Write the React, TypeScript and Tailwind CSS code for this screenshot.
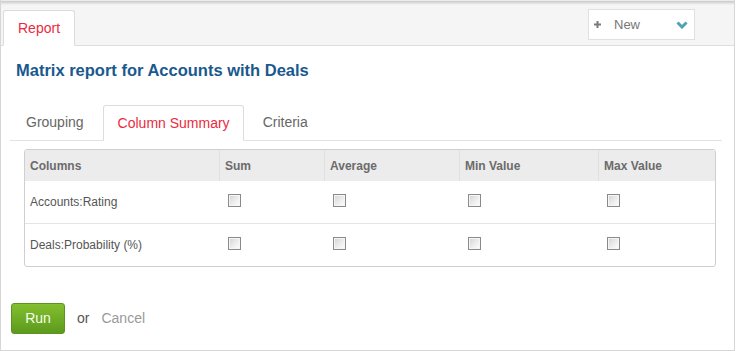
const cols = ["Sum", "Average", "Min Value", "Max Value"];
const rows = ["Accounts:Rating", "Deals:Probability (%)"];

function Box() {
  return (
    <span className="block w-[13px] h-[13px] border border-[#8a8a8a] bg-gradient-to-br from-[#d2d2d2] via-[#ebebeb] to-white shadow-[inset_0_0_0_1px_#f6f6f6]" />
  );
}

export default function App() {
  return (
    <div className="w-[736px] h-[351px] bg-white overflow-hidden font-['Liberation_Sans',Arial,sans-serif]">
      <div className="w-[735px] h-[351px] flex flex-col border-l border-r border-b border-[#d6d6d6]">
        {/* top bar */}
        <div className="h-px bg-[#ececec]" />
        <div className="h-[4px] bg-gradient-to-b from-[#c9c9c9] to-[#f5f5f5]" />
        <div className="h-[41px] bg-[#f5f5f5] border-b border-[#dedede] flex items-end pl-[2px]">
          <div className="w-[72px] h-[36px] -mb-px bg-white border border-[#dcdcdc] border-b-white rounded-t-[3px] flex items-center pl-[14px] text-[14px] text-[#ec2a40]">
            Report
          </div>
          <div className="ml-auto mr-[39px] self-start mt-[4px] w-[107px] h-[31px] bg-white border border-[#e0e0e0] flex items-center pl-[5px] pr-[6px]">
            <svg width="7" height="7" viewBox="0 0 7 7">
              <rect x="2.5" y="0" width="2" height="7" fill="#7a7a7a" />
              <rect x="0" y="2.5" width="7" height="2" fill="#7a7a7a" />
            </svg>
            <span className="ml-[13px] text-[13px] text-[#777]">New</span>
            <svg className="ml-auto" width="12" height="8" viewBox="0 0 12 8">
              <polyline points="1.5,1.5 6,6 10.5,1.5" fill="none" stroke="#4ea3b7" strokeWidth="3" />
            </svg>
          </div>
        </div>

        {/* title */}
        <div className="mt-[14px] pl-[15px] leading-[20px] text-[16.5px] font-bold text-[#19598e]">
          Matrix report for Accounts with Deals
        </div>

        {/* sub tabs */}
        <div className="mt-[25px] ml-[9px] w-[712px] h-[36px] border-b border-[#e2e2e2] flex items-end text-[14px]">
          <div className="h-[35px] flex items-center pl-[16px] pr-[19px] text-[#666]">Grouping</div>
          <div className="h-[36px] -mb-px flex items-center pl-[14px] pr-[13px] bg-white border border-[#dcdcdc] border-b-white rounded-t-[3px] text-[#ec2a40]">
            Column Summary
          </div>
          <div className="h-[35px] flex items-center pl-[19px] text-[#666]">Criteria</div>
        </div>

        {/* table */}
        <div className="mt-[8px] ml-[23px] w-[692px] border border-[#cfcfcf] rounded-[3px] overflow-hidden">
          <div className="grid grid-cols-[195px_105px_135px_139px_1fr] h-[31px] bg-[#ececec] text-[12px] font-bold text-[#6b6b6b]">
            <div className="flex items-center pl-[5px] border-r border-[#e0e0e0]">Columns</div>
            {cols.map((c, i) => (
              <div
                key={c}
                className={
                  i < 3
                    ? "flex items-center pl-[5px] border-r border-[#e0e0e0]"
                    : "flex items-center pl-[5px]"
                }
              >
                {c}
              </div>
            ))}
          </div>
          {rows.map((r, i) => (
            <div
              key={r}
              className={
                i > 0
                  ? "grid grid-cols-[195px_105px_135px_139px_1fr] h-[43px] border-t border-[#e4e4e4] text-[12px] text-[#555]"
                  : "grid grid-cols-[195px_105px_135px_139px_1fr] h-[42px] text-[12px] text-[#555]"
              }
            >
              <div className="flex items-center pl-[5px]">{r}</div>
              {cols.map((c) => (
                <div key={c} className="pl-[8px] pt-[13px]">
                  <Box />
                </div>
              ))}
            </div>
          ))}
        </div>

        {/* actions */}
        <div className="mt-[36px] ml-[10px] flex items-center text-[14px]">
          <button className="w-[54px] h-[31px] rounded-[3px] border border-[#5b9420] bg-gradient-to-b from-[#84bf2f] to-[#5c9a1c] text-[#f4ffe8]">
            Run
          </button>
          <span className="ml-[12px] text-[#555]">or</span>
          <span className="ml-[12px] text-[#9a9a9a]">Cancel</span>
        </div>
      </div>
    </div>
  );
}
